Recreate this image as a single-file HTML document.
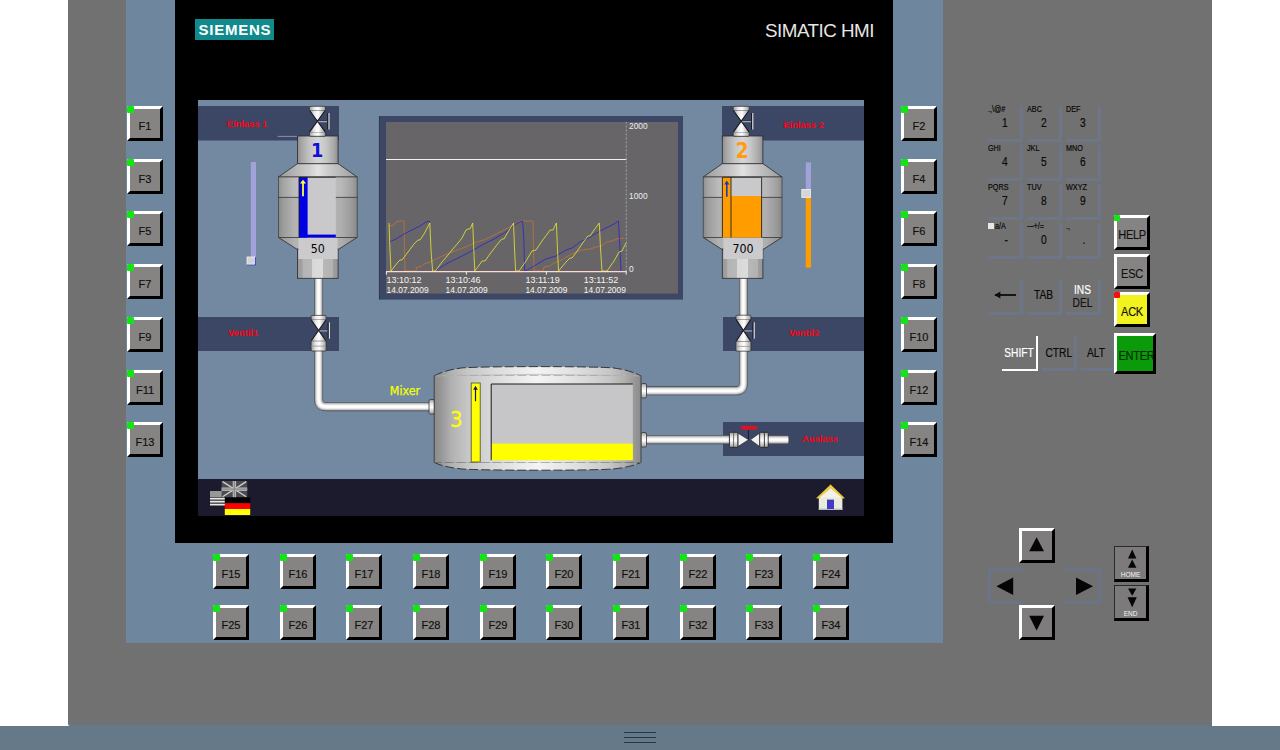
<!DOCTYPE html>
<html lang="en"><head><meta charset="utf-8"><title>SIMATIC HMI</title>
<style>
html,body{margin:0;padding:0;}
body{width:1280px;height:750px;overflow:hidden;background:#fff;position:relative;font-family:"Liberation Sans",sans-serif;}
.a{position:absolute;}
.gray{left:68px;top:0;width:1144px;height:726px;background:linear-gradient(#717171 0,#717171 720px,#6c747c 726px);border-bottom-left-radius:2px;}
.bbar{left:0;top:726px;width:1280px;height:24px;background:#667988;}
.bbar i{position:absolute;left:624px;width:32px;height:1px;background:#22374a;}
.panel{left:126px;top:0;width:817px;height:643px;background:#6f879e;}
.black{left:175px;top:0;width:718px;height:543px;background:#000;}
.logo{left:195px;top:19px;width:79px;height:21px;background:#108a8c;color:#fff;font-weight:bold;font-size:15px;line-height:22px;text-align:center;letter-spacing:.75px;padding-left:1px;box-sizing:border-box;}
.title{left:765px;top:19px;width:110px;height:24px;color:#e6e6e6;font-size:18.8px;line-height:24px;white-space:nowrap;letter-spacing:-.5px;}
.fb{position:absolute;width:36px;height:35px;box-sizing:border-box;background:#868383;border-style:solid;border-width:3px 3px 3px 3px;border-color:#fff #000 #000 #fff;font-size:11px;color:#101010;-webkit-text-stroke-width:.15px;text-align:center;line-height:35px;}
.fb em{display:block;font-style:normal;transform:scaleX(.92);}
.fb i{position:absolute;left:-3px;top:-3px;width:7px;height:7px;background:#12e612;border-radius:1px;}
.fb i.r{background:#f01010;}
.k{position:absolute;width:39px;height:39px;color:#0a0a0a;-webkit-text-stroke-width:.2px;}
.k:before{content:"";position:absolute;left:36px;top:3px;width:3px;height:36px;background:#6c7688;}
.k:after{content:"";position:absolute;left:3.5px;top:36px;width:35.5px;height:3px;background:#6c7688;}
.k.nb:before,.k.nb:after{display:none;}
.k s{position:absolute;left:4px;top:2px;font-size:8.5px;line-height:9px;text-decoration:none;transform:scaleX(.85);transform-origin:0 0;white-space:nowrap;}
.k b{position:absolute;right:15.2px;top:14px;font-weight:normal;font-size:12px;line-height:12px;transform:scaleX(.85);transform-origin:100% 0;}
.sb i{width:6px;height:6px;}
.sb{font-size:12px;letter-spacing:-.3px;color:#101010;}
.he{position:absolute;width:35px;height:36px;box-sizing:border-box;background:#7c7a7a;border-style:solid;border-width:1px 3px 3px 1px;border-color:#2a2a2a #000 #000 #2a2a2a;}
.he span{position:absolute;left:0;right:0;text-align:center;color:#f4f4f4;font-size:6.5px;line-height:7px;}
.k u{position:absolute;left:0;right:0;top:0;text-align:center;text-decoration:none;font-size:12px;line-height:36px;transform:scaleX(.85);}
</style></head>
<body>
<div class="a gray"></div>
<div class="a bbar"><i style="top:6px"></i><i style="top:11px"></i><i style="top:16px"></i></div>
<div class="a panel"></div>
<div class="a black"></div>
<div class="a logo">SIEMENS</div>
<div class="a title">SIMATIC HMI</div>
<div class="fb" style="left:127px;top:106px"><i></i>F1</div>
<div class="fb" style="left:901px;top:106px"><i></i>F2</div>
<div class="fb" style="left:127px;top:159px"><i></i>F3</div>
<div class="fb" style="left:901px;top:159px"><i></i>F4</div>
<div class="fb" style="left:127px;top:211px"><i></i>F5</div>
<div class="fb" style="left:901px;top:211px"><i></i>F6</div>
<div class="fb" style="left:127px;top:264px"><i></i>F7</div>
<div class="fb" style="left:901px;top:264px"><i></i>F8</div>
<div class="fb" style="left:127px;top:317px"><i></i>F9</div>
<div class="fb" style="left:901px;top:317px"><i></i>F10</div>
<div class="fb" style="left:127px;top:370px"><i></i>F11</div>
<div class="fb" style="left:901px;top:370px"><i></i>F12</div>
<div class="fb" style="left:127px;top:422px"><i></i>F13</div>
<div class="fb" style="left:901px;top:422px"><i></i>F14</div>
<div class="fb" style="left:213px;top:554px"><i></i>F15</div>
<div class="fb" style="left:213px;top:605px"><i></i>F25</div>
<div class="fb" style="left:280px;top:554px"><i></i>F16</div>
<div class="fb" style="left:280px;top:605px"><i></i>F26</div>
<div class="fb" style="left:346px;top:554px"><i></i>F17</div>
<div class="fb" style="left:346px;top:605px"><i></i>F27</div>
<div class="fb" style="left:413px;top:554px"><i></i>F18</div>
<div class="fb" style="left:413px;top:605px"><i></i>F28</div>
<div class="fb" style="left:480px;top:554px"><i></i>F19</div>
<div class="fb" style="left:480px;top:605px"><i></i>F29</div>
<div class="fb" style="left:546px;top:554px"><i></i>F20</div>
<div class="fb" style="left:546px;top:605px"><i></i>F30</div>
<div class="fb" style="left:613px;top:554px"><i></i>F21</div>
<div class="fb" style="left:613px;top:605px"><i></i>F31</div>
<div class="fb" style="left:680px;top:554px"><i></i>F22</div>
<div class="fb" style="left:680px;top:605px"><i></i>F32</div>
<div class="fb" style="left:746px;top:554px"><i></i>F23</div>
<div class="fb" style="left:746px;top:605px"><i></i>F33</div>
<div class="fb" style="left:813px;top:554px"><i></i>F24</div>
<div class="fb" style="left:813px;top:605px"><i></i>F34</div>
<svg class="a" style="left:198px;top:100px" width="666" height="416" viewBox="198 100 666 416" font-family="Liberation Sans, sans-serif">
<defs>
<linearGradient id="gNeck" x1="0" x2="1" y1="0" y2="0"><stop offset="0" stop-color="#8e8e8e"/><stop offset=".1" stop-color="#a6a6a6"/><stop offset=".3" stop-color="#c4c4c4"/><stop offset=".5" stop-color="#d6d6d6"/><stop offset=".7" stop-color="#c6c6c6"/><stop offset=".9" stop-color="#a8a8a8"/><stop offset="1" stop-color="#8c8c8c"/></linearGradient>
<linearGradient id="gBodyU" x1="0" x2="1" y1="0" y2="0"><stop offset="0" stop-color="#909090"/><stop offset=".06" stop-color="#a4a4a4"/><stop offset=".2" stop-color="#bcbcbc"/><stop offset=".5" stop-color="#cacaca"/><stop offset=".8" stop-color="#b8b8b8"/><stop offset=".94" stop-color="#a0a0a0"/><stop offset="1" stop-color="#8c8c8c"/></linearGradient>
<linearGradient id="gBodyL" x1="0" x2="1" y1="0" y2="0"><stop offset="0" stop-color="#888"/><stop offset=".06" stop-color="#9c9c9c"/><stop offset=".2" stop-color="#b2b2b2"/><stop offset=".5" stop-color="#c0c0c0"/><stop offset=".8" stop-color="#aeaeae"/><stop offset=".94" stop-color="#989898"/><stop offset="1" stop-color="#868686"/></linearGradient>
<linearGradient id="gCone" x1="0" x2="1" y1="0" y2="0"><stop offset="0" stop-color="#9a9a9a"/><stop offset=".2" stop-color="#b4b4b4"/><stop offset=".38" stop-color="#cccccc"/><stop offset=".5" stop-color="#e2e2e2"/><stop offset=".62" stop-color="#cecece"/><stop offset=".8" stop-color="#b6b6b6"/><stop offset="1" stop-color="#9a9a9a"/></linearGradient>
<linearGradient id="gFoot" x1="0" x2="1" y1="0" y2="0"><stop offset="0" stop-color="#989898"/><stop offset=".12" stop-color="#a2a2a2"/><stop offset=".13" stop-color="#b4b4b4"/><stop offset=".36" stop-color="#b8b8b8"/><stop offset=".37" stop-color="#d8d8d8"/><stop offset=".63" stop-color="#dcdcdc"/><stop offset=".64" stop-color="#b8b8b8"/><stop offset=".87" stop-color="#b2b2b2"/><stop offset=".88" stop-color="#a0a0a0"/><stop offset="1" stop-color="#969696"/></linearGradient>
<linearGradient id="gFl" x1="0" x2="1" y1="0" y2="0"><stop offset="0" stop-color="#9a9a9a"/><stop offset=".3" stop-color="#e8e8e8"/><stop offset=".55" stop-color="#ffffff"/><stop offset="1" stop-color="#a0a0a0"/></linearGradient>
<linearGradient id="gFlH" x1="0" x2="0" y1="0" y2="1"><stop offset="0" stop-color="#9a9a9a"/><stop offset=".3" stop-color="#e8e8e8"/><stop offset=".55" stop-color="#ffffff"/><stop offset="1" stop-color="#a0a0a0"/></linearGradient>
<linearGradient id="gMix" x1="0" x2="1" y1="0" y2="0"><stop offset="0" stop-color="#8a8a8a"/><stop offset=".04" stop-color="#9a9a9a"/><stop offset=".08" stop-color="#b0b0b0"/><stop offset=".16" stop-color="#c6c6c6"/><stop offset=".3" stop-color="#dcdcdc"/><stop offset=".5" stop-color="#f4f4f4"/><stop offset=".7" stop-color="#dedede"/><stop offset=".84" stop-color="#c8c8c8"/><stop offset=".92" stop-color="#b0b0b0"/><stop offset=".96" stop-color="#9c9c9c"/><stop offset="1" stop-color="#8a8a8a"/></linearGradient>
</defs>
<rect x="198" y="100" width="666" height="416" fill="#7389a1"/>
<rect x="198" y="106" width="141" height="34.5" fill="#3c4766"/>
<rect x="198" y="317" width="141" height="34" fill="#3c4766"/>
<rect x="722" y="106" width="142" height="34.5" fill="#3c4766"/>
<rect x="723" y="317" width="141" height="34" fill="#3c4766"/>
<rect x="723" y="422" width="141" height="34" fill="#3c4766"/>
<rect x="198" y="479" width="666" height="37" fill="#1b1b2d"/>
<text x="247" y="127" font-size="9.4" font-weight="bold" fill="#ff0010" text-anchor="middle">Einlass 1</text>
<text x="243" y="335.5" font-size="9.4" font-weight="bold" fill="#ff0010" text-anchor="middle">Ventil1</text>
<text x="803.5" y="127.5" font-size="9.4" font-weight="bold" fill="#ff0010" text-anchor="middle">Einlass 2</text>
<text x="804" y="335.5" font-size="9.4" font-weight="bold" fill="#ff0010" text-anchor="middle">Ventil2</text>
<text x="820" y="442" font-size="9.4" font-weight="bold" fill="#ff0010" text-anchor="middle">Auslass</text>
<path d="M318.6 276 V316" fill="none" stroke="#4a4a4a" stroke-width="8.9" stroke-linejoin="round"/>
<path d="M318.6 276 V316" fill="none" stroke="#9c9c9c" stroke-width="7.7" stroke-linejoin="round"/>
<path d="M318.6 276 V316" fill="none" stroke="#cfcfcf" stroke-width="6.2" stroke-linejoin="round"/>
<path d="M318.6 276 V316" fill="none" stroke="#ececec" stroke-width="4.4" stroke-linejoin="round"/>
<path d="M318.6 276 V316" fill="none" stroke="#ffffff" stroke-width="2.2" stroke-linejoin="round"/>
<path d="M318.6 350.6 V399.5 Q318.6 406.7 325.8 406.7 H431" fill="none" stroke="#4a4a4a" stroke-width="8.9" stroke-linejoin="round"/>
<path d="M318.6 350.6 V399.5 Q318.6 406.7 325.8 406.7 H431" fill="none" stroke="#9c9c9c" stroke-width="7.7" stroke-linejoin="round"/>
<path d="M318.6 350.6 V399.5 Q318.6 406.7 325.8 406.7 H431" fill="none" stroke="#cfcfcf" stroke-width="6.2" stroke-linejoin="round"/>
<path d="M318.6 350.6 V399.5 Q318.6 406.7 325.8 406.7 H431" fill="none" stroke="#ececec" stroke-width="4.4" stroke-linejoin="round"/>
<path d="M318.6 350.6 V399.5 Q318.6 406.7 325.8 406.7 H431" fill="none" stroke="#ffffff" stroke-width="2.2" stroke-linejoin="round"/>
<path d="M743.4 276 V316" fill="none" stroke="#4a4a4a" stroke-width="8.9" stroke-linejoin="round"/>
<path d="M743.4 276 V316" fill="none" stroke="#9c9c9c" stroke-width="7.7" stroke-linejoin="round"/>
<path d="M743.4 276 V316" fill="none" stroke="#cfcfcf" stroke-width="6.2" stroke-linejoin="round"/>
<path d="M743.4 276 V316" fill="none" stroke="#ececec" stroke-width="4.4" stroke-linejoin="round"/>
<path d="M743.4 276 V316" fill="none" stroke="#ffffff" stroke-width="2.2" stroke-linejoin="round"/>
<path d="M743.4 350.6 V383.6 Q743.4 390.8 736.2 390.8 H646" fill="none" stroke="#4a4a4a" stroke-width="8.9" stroke-linejoin="round"/>
<path d="M743.4 350.6 V383.6 Q743.4 390.8 736.2 390.8 H646" fill="none" stroke="#9c9c9c" stroke-width="7.7" stroke-linejoin="round"/>
<path d="M743.4 350.6 V383.6 Q743.4 390.8 736.2 390.8 H646" fill="none" stroke="#cfcfcf" stroke-width="6.2" stroke-linejoin="round"/>
<path d="M743.4 350.6 V383.6 Q743.4 390.8 736.2 390.8 H646" fill="none" stroke="#ececec" stroke-width="4.4" stroke-linejoin="round"/>
<path d="M743.4 350.6 V383.6 Q743.4 390.8 736.2 390.8 H646" fill="none" stroke="#ffffff" stroke-width="2.2" stroke-linejoin="round"/>
<path d="M646 439.7 H729" fill="none" stroke="#4a4a4a" stroke-width="8.9" stroke-linejoin="round"/>
<path d="M646 439.7 H729" fill="none" stroke="#9c9c9c" stroke-width="7.7" stroke-linejoin="round"/>
<path d="M646 439.7 H729" fill="none" stroke="#cfcfcf" stroke-width="6.2" stroke-linejoin="round"/>
<path d="M646 439.7 H729" fill="none" stroke="#ececec" stroke-width="4.4" stroke-linejoin="round"/>
<path d="M646 439.7 H729" fill="none" stroke="#ffffff" stroke-width="2.2" stroke-linejoin="round"/>
<path d="M768.4 439.7 H788.2" fill="none" stroke="#4a4a4a" stroke-width="8.9" stroke-linejoin="round"/>
<path d="M768.4 439.7 H788.2" fill="none" stroke="#9c9c9c" stroke-width="7.7" stroke-linejoin="round"/>
<path d="M768.4 439.7 H788.2" fill="none" stroke="#cfcfcf" stroke-width="6.2" stroke-linejoin="round"/>
<path d="M768.4 439.7 H788.2" fill="none" stroke="#ececec" stroke-width="4.4" stroke-linejoin="round"/>
<path d="M768.4 439.7 H788.2" fill="none" stroke="#ffffff" stroke-width="2.2" stroke-linejoin="round"/>
<rect x="429" y="399.5" width="5.5" height="14.5" rx="1.5" fill="url(#gFlH)" stroke="#333" stroke-width=".8"/>
<rect x="641" y="383.5" width="5.5" height="14.5" rx="1.5" fill="url(#gFlH)" stroke="#333" stroke-width=".8"/>
<rect x="641" y="432.5" width="5.5" height="14.5" rx="1.5" fill="url(#gFlH)" stroke="#333" stroke-width=".8"/>
<path d="M277.6 136.4H298" stroke="#9aa2b4" stroke-width=".8"/>
<rect x="297.5" y="136" width="40.60000000000002" height="28" fill="url(#gNeck)" stroke="#2a2a2a" stroke-width=".8"/>
<path d="M297.5 163.7 L338.1 163.7 L357.2 177 L278.40000000000003 177 Z" fill="url(#gCone)" stroke="#2a2a2a" stroke-width=".8"/>
<path d="M278.40000000000003 237.4 L357.2 237.4 L338.1 249.6 L297.5 249.6 Z" fill="url(#gBodyL)" stroke="#2a2a2a" stroke-width=".8"/>
<rect x="278.40000000000003" y="177" width="78.79999999999995" height="20.3" fill="url(#gBodyU)" stroke="#3a3a3a" stroke-width=".7"/>
<rect x="278.40000000000003" y="197.3" width="78.79999999999995" height="40.2" fill="url(#gBodyL)" stroke="#3a3a3a" stroke-width=".7"/>
<rect x="297.5" y="249" width="40.60000000000002" height="29.3" fill="url(#gFoot)" stroke="#2a2a2a" stroke-width=".8"/>
<rect x="722.3000000000001" y="136" width="40.59999999999991" height="28" fill="url(#gNeck)" stroke="#2a2a2a" stroke-width=".8"/>
<path d="M722.3000000000001 163.7 L762.9 163.7 L782.0 177 L703.2 177 Z" fill="url(#gCone)" stroke="#2a2a2a" stroke-width=".8"/>
<path d="M703.2 237.4 L782.0 237.4 L762.9 249.6 L722.3000000000001 249.6 Z" fill="url(#gBodyL)" stroke="#2a2a2a" stroke-width=".8"/>
<rect x="703.2" y="177" width="78.79999999999995" height="20.3" fill="url(#gBodyU)" stroke="#3a3a3a" stroke-width=".7"/>
<rect x="703.2" y="197.3" width="78.79999999999995" height="40.2" fill="url(#gBodyL)" stroke="#3a3a3a" stroke-width=".7"/>
<rect x="722.3000000000001" y="249" width="40.59999999999991" height="29.3" fill="url(#gFoot)" stroke="#2a2a2a" stroke-width=".8"/>
<rect x="299" y="177" width="36.8" height="60.5" fill="#c9c8ca"/>
<rect x="299" y="177" width="8.6" height="60.5" fill="#0000e6"/>
<rect x="299" y="234.6" width="36.8" height="2.9" fill="#0000e6"/>
<path d="M299 237.5V177.3H335.8" fill="none" stroke="#222" stroke-width=".9"/>
<path d="M302.1 196.2 V183.6 H299.9 L303 179.8 L306.1 183.6 H303.9 V196.2 Z" fill="#ffff30"/>
<rect x="722" y="177" width="40" height="60.5" fill="#c9c8ca"/>
<rect x="722" y="177" width="9" height="60.5" fill="#ff9c00"/>
<rect x="731" y="196" width="31" height="41.5" fill="#ff9c00"/>
<path d="M722.4 237.5V177.3H761.6V237.5 M731 177V237.5" fill="none" stroke="#222" stroke-width=".9"/>
<path d="M726 196.8 V184.6 H724.2 L726.8 180.4 L729.4 184.6 H727.6 V196.8 Z" fill="#1c3cb0"/>
<rect x="298.4" y="238" width="39.2" height="21" fill="#cbcacc"/>
<rect x="723.4" y="238" width="39.4" height="21" fill="#cbcacc"/>
<text x="317.8" y="252.6" font-family="DejaVu Sans Condensed, DejaVu Sans, sans-serif" font-size="12.3" fill="#000" text-anchor="middle">50</text>
<text x="743" y="252.6" font-family="DejaVu Sans Condensed, DejaVu Sans, sans-serif" font-size="12.3" fill="#000" text-anchor="middle">700</text>
<text x="317.2" y="157.3" font-family="DejaVu Sans Condensed, DejaVu Sans, sans-serif" font-weight="bold" font-size="19.6" fill="#1010d8" text-anchor="middle">1</text>
<text x="742.2" y="157.9" font-family="DejaVu Sans Condensed, DejaVu Sans, sans-serif" font-weight="bold" font-size="20.5" fill="#ff9c10" text-anchor="middle">2</text>
<rect x="309.4" y="106.3" width="16" height="4.2" rx="1" fill="url(#gFl)" stroke="#2a2a2a" stroke-width=".7"/>
<rect x="309.4" y="131.9" width="16" height="4.4" rx="1" fill="url(#gFl)" stroke="#2a2a2a" stroke-width=".7"/>
<path d="M309.79999999999995 110.5 L325.0 110.5 L317.4 121.2 Z M309.79999999999995 131.9 L325.0 131.9 L317.4 121.2 Z" fill="url(#gFl)"/>
<path d="M309.59999999999997 110.5 L325.2 131.9 M325.2 110.5 L309.59999999999997 131.9" fill="none" stroke="#1a1a1a" stroke-width="1.1"/>
<path d="M318.4 120.9 H327.4" stroke="#2a2a2a" stroke-width=".7"/>
<path d="M318.4 121.7 H327.4" stroke="#d0d0d0" stroke-width=".9"/>
<path d="M327.79999999999995 113.0 V129.6" stroke="#1a1a1a" stroke-width="1.2"/>
<path d="M328.99999999999994 113.0 V129.6" stroke="#e8e8e8" stroke-width="1.1"/>
<rect x="733.2" y="106.3" width="16" height="4.2" rx="1" fill="url(#gFl)" stroke="#2a2a2a" stroke-width=".7"/>
<rect x="733.2" y="131.9" width="16" height="4.4" rx="1" fill="url(#gFl)" stroke="#2a2a2a" stroke-width=".7"/>
<path d="M733.6 110.5 L748.8000000000001 110.5 L741.2 121.2 Z M733.6 131.9 L748.8000000000001 131.9 L741.2 121.2 Z" fill="url(#gFl)"/>
<path d="M733.4000000000001 110.5 L749.0 131.9 M749.0 110.5 L733.4000000000001 131.9" fill="none" stroke="#1a1a1a" stroke-width="1.1"/>
<path d="M742.2 120.9 H751.2" stroke="#2a2a2a" stroke-width=".7"/>
<path d="M742.2 121.7 H751.2" stroke="#d0d0d0" stroke-width=".9"/>
<path d="M751.6 113.0 V129.6" stroke="#1a1a1a" stroke-width="1.2"/>
<path d="M752.8000000000001 113.0 V129.6" stroke="#e8e8e8" stroke-width="1.1"/>
<rect x="311.1" y="315.4" width="15.0" height="4.6" rx="1" fill="url(#gFl)" stroke="#2a2a2a" stroke-width=".7"/>
<rect x="311.1" y="340.8" width="15.0" height="10.2" rx="1" fill="url(#gFl)" stroke="#2a2a2a" stroke-width=".7"/>
<path d="M311.1 346.1H326.1" stroke="#8a8a8a" stroke-width=".7"/>
<path d="M311.5 320.0 L325.70000000000005 320.0 L318.6 330.4 Z M311.5 340.8 L325.70000000000005 340.8 L318.6 330.4 Z" fill="url(#gFl)"/>
<path d="M311.3 320.0 L325.90000000000003 340.8 M325.90000000000003 320.0 L311.3 340.8" fill="none" stroke="#1a1a1a" stroke-width="1.1"/>
<path d="M319.6 330.09999999999997 H327.80000000000007" stroke="#2a2a2a" stroke-width=".7"/>
<path d="M319.6 330.9 H327.80000000000007" stroke="#d0d0d0" stroke-width=".9"/>
<path d="M328.20000000000005 322.2 V338.79999999999995" stroke="#1a1a1a" stroke-width="1.2"/>
<path d="M329.40000000000003 322.2 V338.79999999999995" stroke="#e8e8e8" stroke-width="1.1"/>
<rect x="735.9" y="315.2" width="15.0" height="4.4" rx="1" fill="url(#gFl)" stroke="#2a2a2a" stroke-width=".7"/>
<rect x="735.9" y="341.2" width="15.0" height="10" rx="1" fill="url(#gFl)" stroke="#2a2a2a" stroke-width=".7"/>
<path d="M735.9 346.4H750.9" stroke="#8a8a8a" stroke-width=".7"/>
<path d="M736.3 319.59999999999997 L750.5 319.59999999999997 L743.4 330.4 Z M736.3 341.2 L750.5 341.2 L743.4 330.4 Z" fill="url(#gFl)"/>
<path d="M736.1 319.59999999999997 L750.6999999999999 341.2 M750.6999999999999 319.59999999999997 L736.1 341.2" fill="none" stroke="#1a1a1a" stroke-width="1.1"/>
<path d="M744.4 330.09999999999997 H752.6" stroke="#2a2a2a" stroke-width=".7"/>
<path d="M744.4 330.9 H752.6" stroke="#d0d0d0" stroke-width=".9"/>
<path d="M753.0 322.2 V338.79999999999995" stroke="#1a1a1a" stroke-width="1.2"/>
<path d="M754.2 322.2 V338.79999999999995" stroke="#e8e8e8" stroke-width="1.1"/>
<rect x="729.4" y="432.3" width="8.5" height="15" rx="1" fill="url(#gFlH)" stroke="#1a1a1a" stroke-width=".8"/>
<path d="M733.6 432.3V447.3" stroke="#4a4a4a" stroke-width=".8"/>
<rect x="759.7" y="432.3" width="8.5" height="15" rx="1" fill="url(#gFlH)" stroke="#1a1a1a" stroke-width=".8"/>
<path d="M764.4 432.3V447.3" stroke="#2a2a2a" stroke-width=".9"/>
<path d="M738.1 433.2 L748.6 439.8 L738.1 446.4 Z M759.5 433.2 L750.4 439.8 L759.5 446.4 Z" fill="#f0f0f0" stroke="#2a2a2a" stroke-width=".7"/>
<path d="M748.4 439.4 V429.4" stroke="#1a1a3a" stroke-width="1.1"/>
<rect x="740.8" y="425.8" width="16.4" height="3.9" rx="1.8" fill="#d81426"/>
<rect x="250.8" y="162" width="5.2" height="96" fill="#a2a2da"/>
<rect x="247" y="257" width="8.8" height="8.2" fill="#0a0ad0"/>
<rect x="247" y="257" width="7.8" height="7.2" fill="#d2d2d2" stroke="#f2f2f2" stroke-width=".8"/>
<rect x="805.8" y="162.4" width="5.2" height="28" fill="#a2a2da"/>
<rect x="805.8" y="196" width="5.2" height="71.6" fill="#ff9c00"/>
<rect x="801.8" y="189.4" width="8.6" height="8" fill="#d6d6d6" stroke="#f2f2f2" stroke-width=".8"/>
<path d="M434.2 376 C440 372.5 450 369.4 462 367.9 C485 366.2 590 366.2 613 367.9 C625 369.4 635 372.5 641 376 Z" fill="url(#gMix)" stroke="#2a2a2a" stroke-width=".9" stroke-dasharray="9 3"/>
<path d="M434.2 462.4 C440 465.4 450 467.8 462 469 C485 470.6 590 470.6 613 469 C625 467.8 635 465.4 641 462.4 Z" fill="url(#gMix)" stroke="#2a2a2a" stroke-width=".9" stroke-dasharray="9 3"/>
<rect x="434.2" y="375.6" width="206.8" height="87" fill="url(#gMix)"/>
<path d="M434.2 375.6V462.6M641 375.6V462.6" stroke="#3a3a3a" stroke-width=".9"/>
<path d="M436 375.8 Q537.6 372.8 639 375.8" fill="none" stroke="#b8b8b8" stroke-width=".8"/>
<rect x="471.2" y="383" width="9" height="79" fill="#ffff00" stroke="#4a4a30" stroke-width=".8"/>
<path d="M474.9 401.2 V389.8 H473.2 L475.5 385.8 L477.8 389.8 H476.1 V401.2 Z" fill="#14146e"/>
<rect x="491.2" y="384" width="141.6" height="76.2" fill="#c6c5c7"/>
<rect x="491.2" y="443.6" width="141.6" height="16.6" fill="#ffff00"/>
<path d="M491.2 460.2V384H632.8" fill="none" stroke="#1a1a1a" stroke-width="1"/>
<text x="456.2" y="426.8" font-family="DejaVu Sans Condensed, DejaVu Sans, sans-serif" font-size="22" fill="#ffff00" stroke="#ffff00" stroke-width=".3" text-anchor="middle">3</text>
<text x="405" y="395.2" font-family="DejaVu Sans Condensed, DejaVu Sans, sans-serif" font-size="12.4" fill="#f4ff00" stroke="#f4ff00" stroke-width=".25" text-anchor="middle">Mixer</text>
<rect x="379" y="116" width="304" height="183.6" fill="#3c4766"/>
<path d="M379.4 116V299.6" stroke="#2c3550" stroke-width=".8"/>
<rect x="386" y="122" width="292" height="171.6" fill="#676567"/>
<path d="M386 159.5H626.4" stroke="#f2f2f2" stroke-width="1.1"/>
<path d="M626.3 122V271.6" stroke="#c4c4c4" stroke-width="1" stroke-dasharray="1 3"/>
<path d="M626.3 122V271.6" stroke="#8a8a8a" stroke-width=".6"/>
<polyline fill="none" stroke="#e07a28" stroke-width=".9" stroke-opacity=".65" points="389,226 394,225 396,222 399,221 404,221 405,271 416,271 416.5,267.5 421,266.5 424,264 430,262 440,257 452,252 460,249 468,246 476,242 484,240 492,236 500,232 506,229 512,226 517,223 520,221 526,221 533,221 534,271 543,271 544,267 550,266 554,263 562,260 568,256 574,253 582,250 590,249 596,247 602,246 606,242 612,241 616,239 624,238"/>
<polyline fill="none" stroke="#2a22c8" stroke-width=".95" stroke-opacity=".82" points="389,242 396,239 404,234 412,230 420,226 426,222 429,221 430,222"/>
<polyline fill="none" stroke="#2a22c8" stroke-width=".95" stroke-opacity=".82" points="435.4,271 446,264 458,258 470,252 482,245 494,239 506,232 512,227 516,224 520,222 522.6,221 523.6,235 524.8,271 525.6,271 534,266 546,259 556,256 566,250 572,248 580,242 590,237 600,231 608,227 614,224 618.4,221 619.6,240 621,271"/>
<polyline fill="none" stroke="#eef02a" stroke-width=".9" stroke-opacity=".85" points="389,223 389.8,246 391,271 398,262 400,260 402,260 408,252 414,244 418,240 420,240 424,234 429.8,223 431,250 432.6,271 435.4,271 442,262 448,255 452,250 458,243 462,238 466,230 468,229 470,229 472.7,223 473.8,250 474.8,271 480,264 482,261 485,261 490,254 496,246 500,241 502,239 504,239 508,232 513.5,223 514.6,250 515.6,271 519,271 526,261 532,251 536,250 542,241 548,233 550,230 553,230 556.4,223 557.5,250 558.5,271 566,262 570,258 572,258 578,250 584,241 588,236 590,236 594,230 599.3,223 600.6,250 602,271 607,271 614,261 619,252 622,251 626,243"/>
<path d="M386 271.6H626.6" stroke="#ffd8d0" stroke-width="1.1"/>
<path d="M386.4 271.6V274.6M466.4 271.6V274.6M546.4 271.6V274.6M626.2 271.6V274.6" stroke="#f0f0f0" stroke-width="1"/>
<text x="386.6" y="283" font-size="9" fill="#f4f4f4">13:10:12</text><text x="386.6" y="292.6" font-size="9" fill="#f4f4f4" textLength="42" lengthAdjust="spacingAndGlyphs">14.07.2009</text>
<text x="445.6" y="283" font-size="9" fill="#f4f4f4">13:10:46</text><text x="445.6" y="292.6" font-size="9" fill="#f4f4f4" textLength="42" lengthAdjust="spacingAndGlyphs">14.07.2009</text>
<text x="525.4" y="283" font-size="9" fill="#f4f4f4">13:11:19</text><text x="525.4" y="292.6" font-size="9" fill="#f4f4f4" textLength="42" lengthAdjust="spacingAndGlyphs">14.07.2009</text>
<text x="583.8" y="283" font-size="9" fill="#f4f4f4">13:11:52</text><text x="583.8" y="292.6" font-size="9" fill="#f4f4f4" textLength="42" lengthAdjust="spacingAndGlyphs">14.07.2009</text>
<text x="629" y="129" font-size="8.4" fill="#ececec">2000</text>
<text x="629" y="199.4" font-size="8.4" fill="#ececec">1000</text>
<text x="629" y="271.8" font-size="8.4" fill="#ececec">0</text>
<g>
<rect x="210" y="491" width="15" height="14.4" fill="#5a5a5a"/>
<rect x="210" y="498.0" width="15" height="1.4" fill="#e8e8e8"/>
<rect x="210" y="501.0" width="15" height="1.4" fill="#e8e8e8"/>
<rect x="210" y="504.0" width="15" height="1.4" fill="#e8e8e8"/>
<rect x="210" y="491" width="15" height="6" fill="#8c8c8c"/>
<path d="M210.5 492h14M210.5 494h14M210.5 496h14" stroke="#c8c8c8" stroke-width=".8" stroke-dasharray="1 1"/>
<rect x="221.6" y="481" width="25.6" height="16.4" fill="#4c4c50"/>
<path d="M222.6 481.6 L246.2 496.8 M246.2 481.6 L222.6 496.8" stroke="#d0d0d0" stroke-width="1.3"/>
<path d="M234.4 481V497.4" stroke="#b8b8b8" stroke-width="3.4"/><path d="M221.6 489.2H247.2" stroke="#b8b8b8" stroke-width="3.4"/>
<path d="M234.4 481V497.4M221.6 489.2H247.2" stroke="#888" stroke-width="1.2"/>
<rect x="224.8" y="497.4" width="25.4" height="6" fill="#000"/><rect x="224.8" y="503.2" width="25.4" height="6" fill="#ff0000"/><rect x="224.8" y="509" width="25.4" height="6" fill="#ffff00"/>
</g>
<path d="M818.8 497 H842.4 V510 H818.8 Z" fill="#e9ecdc"/>
<path d="M818.8 508.6H842.4V510H818.8Z" fill="#b9bcc4"/>
<path d="M827 499.6H834V509H827Z" fill="#4438c8"/>
<path d="M816.6 498 L830.6 484.8 L844.4 498 L842 498.2 L830.6 488.4 L819.2 498.2 Z" fill="#f0cc3c" stroke="#e8c030" stroke-width=".6"/>
<path d="M819.4 497.6 L830.6 488.2 L841.8 497.6 Z" fill="#f2f2ea"/>
</svg>
<div class="k" style="left:984px;top:103px"><s>.,\@#</s><b>1</b></div>
<div class="k" style="left:1023px;top:103px"><s>ABC</s><b>2</b></div>
<div class="k" style="left:1062px;top:103px"><s>DEF</s><b>3</b></div>
<div class="k" style="left:984px;top:142px"><s>GHI</s><b>4</b></div>
<div class="k" style="left:1023px;top:142px"><s>JKL</s><b>5</b></div>
<div class="k" style="left:1062px;top:142px"><s>MNO</s><b>6</b></div>
<div class="k" style="left:984px;top:181px"><s>PQRS</s><b>7</b></div>
<div class="k" style="left:1023px;top:181px"><s>TUV</s><b>8</b></div>
<div class="k" style="left:1062px;top:181px"><s>WXYZ</s><b>9</b></div>
<div class="k" style="left:984px;top:220px"><i class="a" style="left:4px;top:2.5px;width:6px;height:6px;background:#e8e8e8"></i><s style="left:11px">a/A</s><b>-</b></div>
<div class="k" style="left:1023px;top:220px"><s>-–+/=</s><b>0</b></div>
<div class="k" style="left:1062px;top:220px"><s>.,</s><b>.</b></div>
<div class="k" style="left:984px;top:275.5px"><svg class="a" style="left:8px;top:12px" width="26" height="14" viewBox="0 0 26 14"><path d="M3 7H24" stroke="#0c0c0c" stroke-width="1.8"/><path d="M2.4 7L8.4 3.4V10.6Z" fill="#0c0c0c"/></svg></div>
<div class="k" style="left:1023px;top:275.5px"><u style="left:2px;top:1.4px">TAB</u></div>
<div class="k" style="left:1062px;top:275.5px"><u style="line-height:12.5px;top:8.5px;left:2px;color:#fff">INS<br><span style="color:#141414">DEL</span></u></div>
<div class="k nb" style="left:999px;top:332px"><i class="a" style="left:36.5px;top:3.5px;width:2.5px;height:35.5px;background:#fff"></i><i class="a" style="left:3px;top:36.8px;width:36px;height:2.2px;background:#fff"></i><u style="color:#fff;left:1px;top:3px">SHIFT</u></div>
<div class="k" style="left:1038px;top:332px"><u style="left:1.5px;top:3px">CTRL</u></div>
<div class="k" style="left:1077px;top:332px;width:37px;overflow:hidden"><u style="left:1px;top:3px">ALT</u></div>
<div class="fb sb" style="left:1114px;top:215px"><i></i><em>HELP</em></div>
<div class="fb sb" style="left:1114px;top:254px"><em>ESC</em></div>
<div class="fb sb" style="left:1114px;top:292px;background:#f2f21e"><i class="r"></i><em>ACK</em></div>
<div class="fb sb" style="left:1114px;top:333px;width:42px;height:41px;background:#0a9a0a;line-height:40px;color:#052805"><em>ENTER</em></div>
<div class="fb" style="left:1019px;top:528px;background:#7e7c7c"><svg class="a" style="left:0;top:0" width="30" height="30" viewBox="0 0 30 30"><path d="M7.2 20.2 L22 20.2 L14.6 6.2 Z" fill="#050505"/></svg></div>
<div class="fb" style="left:1019px;top:605px;background:#7e7c7c"><svg class="a" style="left:0;top:0" width="30" height="30" viewBox="0 0 30 30"><path d="M7.2 7.8 L22 7.8 L14.6 22.4 Z" fill="#050505"/></svg></div>
<div class="a" style="left:988px;top:568px;width:36px;height:36px;box-sizing:border-box;border:3px solid #6a7388;border-right:0"></div>
<div class="a" style="left:1065px;top:568px;width:36px;height:36px;box-sizing:border-box;border:3px solid #6a7388;border-left:0"></div>
<svg class="a" style="left:988px;top:568px" width="113" height="36" viewBox="988 568 113 36"><path d="M996.4 586.2 L1013.2 577.4 V595 Z M1093 586.2 L1076 577.4 V595 Z" fill="#050505"/></svg>
<div class="he" style="left:1114px;top:546px"><svg class="a" style="left:0;top:0" width="32" height="32" viewBox="1115 547 32 32"><path d="M1132.2 549.4 L1136.4 558.6 H1128 Z M1132.2 559.6 L1136.4 567.8 H1128 Z" fill="#050505"/></svg><span style="top:24.4px">HOME</span></div>
<div class="he" style="left:1114px;top:585px"><svg class="a" style="left:0;top:0" width="32" height="32" viewBox="1115 586 32 32"><path d="M1128 588.6 H1136.4 L1132.2 595.8 Z M1127.6 597.2 H1136.8 L1132.2 607.2 Z" fill="#050505"/></svg><span style="top:24.4px">END</span></div>
</body></html>
